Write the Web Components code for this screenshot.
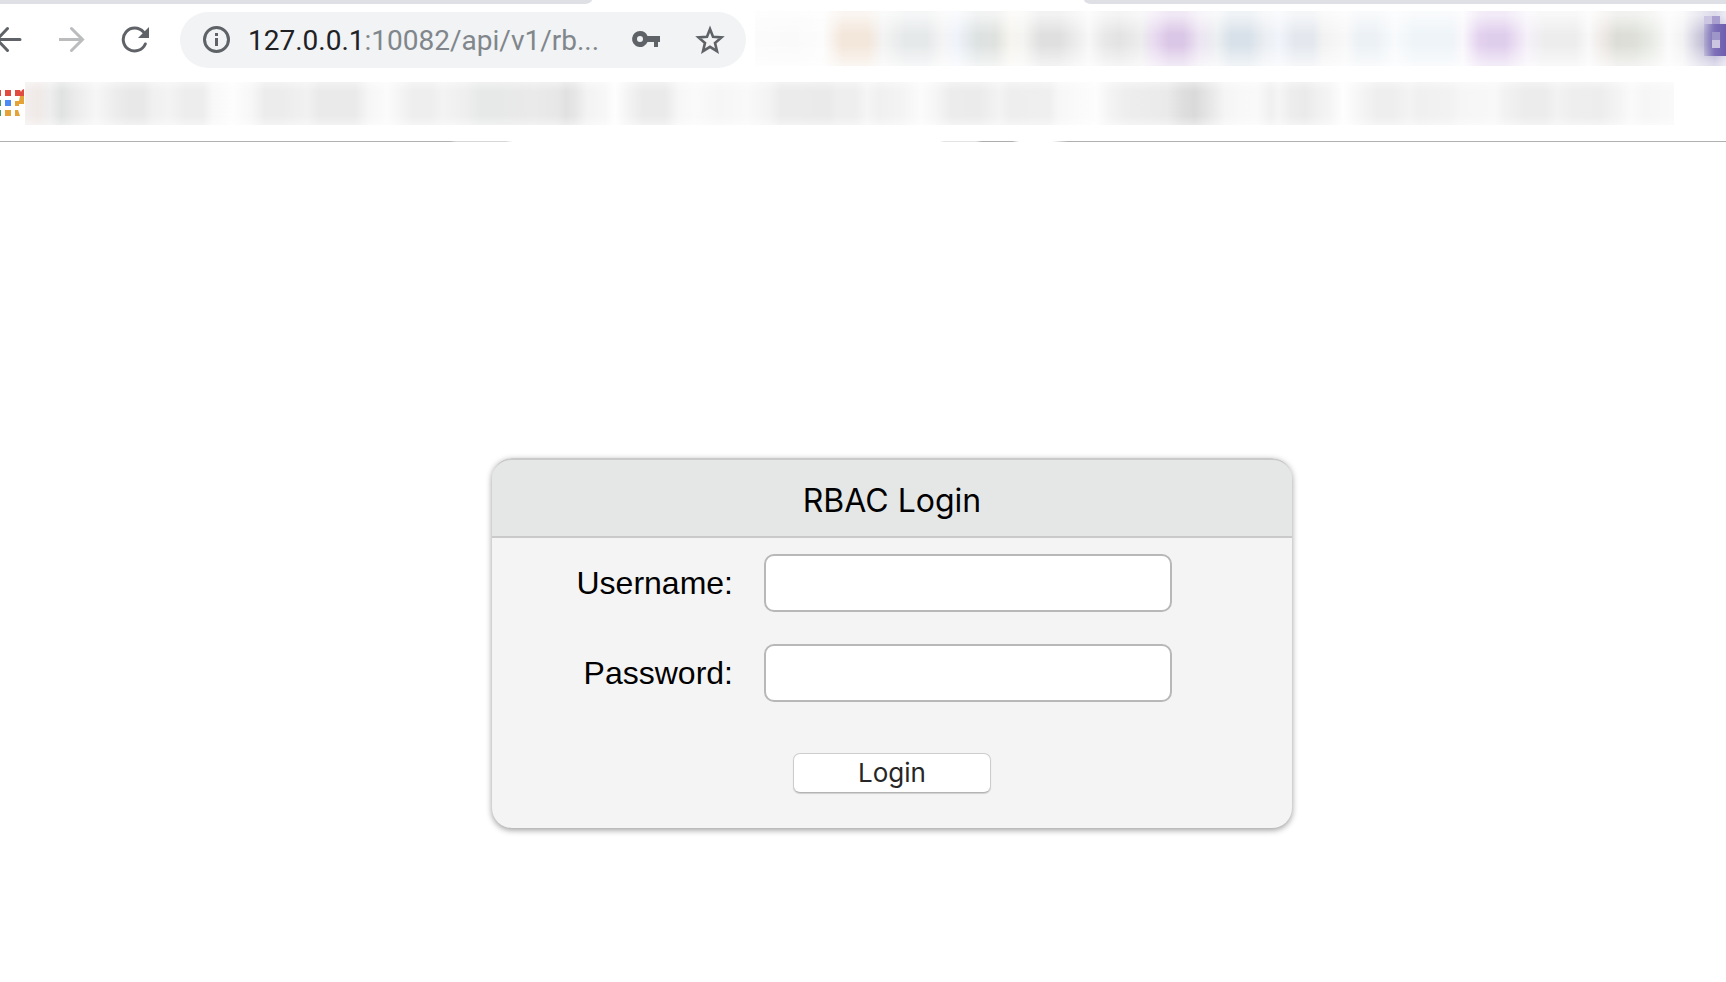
<!DOCTYPE html>
<html lang="en">
<head>
<meta charset="utf-8">
<title>RBAC Login</title>
<style>
body{margin:0;background:#fff;font-family:Inter,"Liberation Sans",sans-serif}
</style>
</head>
<body>
<browser-chrome>
  <address-bar slot="address" host="127.0.0.1" path=":10082/api/v1/rb..."></address-bar>
</browser-chrome>
<login-card heading="RBAC Login">
  <login-field label="Username:" type="text" name="username"></login-field>
  <login-field label="Password:" type="password" name="password"></login-field>
</login-card>
<script>
const define = (name, html, setup) => customElements.define(name, class extends HTMLElement {
  connectedCallback() {
    if (this.shadowRoot) return;
    const t = document.createElement('template');
    t.innerHTML = html;
    this.attachShadow({ mode: 'open' }).append(t.content.cloneNode(true));
    if (setup) setup.call(this, this.shadowRoot);
  }
});

/* A strip of obscured content: neighbouring tones blend into each other. */
const toneRow = (tones) => {
  const end = tones[tones.length - 1][0];
  return 'linear-gradient(90deg,' + tones.map(([x, c]) => `${c} ${(x / end * 100).toFixed(2)}%`).join(',') + ')';
};

define('extension-strip', `
<style>
:host{display:block;position:relative;height:55px}
.row,svg{position:absolute;inset:0}
.edge{opacity:.4}
.row.core{-webkit-mask-image:linear-gradient(#0000 8%,#000 42%,#000 62%,#0000 96%);mask-image:linear-gradient(#0000 8%,#000 42%,#000 62%,#0000 96%)}
svg{left:auto;width:22px;height:55px}
</style>
<div class="row edge"></div><div class="row core"></div>
<svg viewBox="0 0 22 55" aria-hidden="true">
<defs><linearGradient id="g"><stop offset="0" stop-color="#7d70b8" stop-opacity=".2"/><stop offset=".5" stop-color="#7d70b8"/><stop offset="1" stop-color="#6d5daf"/></linearGradient></defs>
<path fill="url(#g)" d="M0 13h22v32H0z"/>
<path fill="#cdc6e2" d="M0 5h8v8H0z"/><path fill="#aaa0d0" d="M8 5h8v8H8z"/>
<path fill="#9e95c9" d="M8 21h8v8H8z"/><path fill="#cbc5df" d="M8 29h8v8H8z"/>
</svg>`, function (root) {
  const tones = [[0,'#fbfbfb'],[40,'#fafafa'],[68,'#fcfcfc'],[88,'#f3e6da'],[112,'#f3e6da'],[128,'#f3f3f3'],[150,'#e6e9ea'],[172,'#e6e9ea'],[188,'#f4f4f5'],[202,'#eff3fa'],[222,'#dde2e2'],[240,'#dfe2df'],[256,'#f7f5ef'],[268,'#f4f4f2'],[286,'#dfdfdf'],[304,'#dfdfdf'],[322,'#ededed'],[334,'#f7f7f7'],[350,'#e8e8e8'],[364,'#e3e3e3'],[386,'#ededee'],[400,'#e8daf0'],[414,'#dac6e6'],[428,'#dac6e6'],[444,'#ece4f2'],[462,'#eceff1'],[476,'#d8e1e9'],[494,'#d8e1e9'],[510,'#ebeef2'],[524,'#f1f4fa'],[540,'#e4e8ee'],[558,'#e4e8ee'],[568,'#f2f2f2'],[590,'#f8f8f8'],[604,'#ecf1f5'],[620,'#ecf1f5'],[640,'#f8fafc'],[660,'#eef4f8'],[696,'#eef4f8'],[708,'#f9f7fb'],[724,'#e4d3ef'],[734,'#dfcdec'],[750,'#dfcdec'],[772,'#f5f0f9'],[790,'#ededed'],[820,'#ededed'],[834,'#f8f8f8'],[850,'#ece7e3'],[862,'#dcddd7'],[880,'#dddfd8'],[896,'#e8ebe5'],[914,'#fafafa'],[928,'#f2f2f4'],[942,'#d0cede'],[960,'#a9a2cb'],[971,'#d2cee5']];
  const bg = toneRow(tones);
  for (const r of root.querySelectorAll('.row')) r.style.background = bg;
});

define('bookmark-strip', `
<style>
:host{display:flex;height:43px;padding-right:52px}
svg{flex:none;width:25px;height:43px}
.row{flex:1;position:relative}
.row::after{content:"";position:absolute;inset:0;background:linear-gradient(#fff6,#fff0 22%,#fff0 78%,#fff6)}
</style>
<svg viewBox="0 0 25 43" aria-hidden="true">
<path fill="#e04a3f" d="M0 8h1v6H0zM5 8h6v6H5zM15 8h5l1 2 1-2 2-1v7H15z"/>
<path fill="#4b9a5f" d="M0 18h1v6H0zM0 28h1v6H0z"/><path fill="#4c8bf5" d="M5 18h6v6H5z"/>
<path fill="#e3a336" d="M5 28h6v6H5zM20 14h4v8h-5v2h-4v-5h4zM15 28h3l2 6h-5z"/>
</svg><div class="row"></div>`, function (root) {
  root.querySelector('.row').style.background = toneRow([[0,'#f2efee'],[12,'#f0e9e7'],[25,'#eee'],[37,'#e0e1e1'],[50,'#ebebeb'],[71,'#f6f6f6'],[92,'#ececec'],[105,'#e8e8e8'],[118,'#e8e8e8'],[128,'#f0f0f0'],[144,'#f3f3f3'],[160,'#ededed'],[178,'#ededed'],[188,'#f8f8f8'],[208,'#fdfdfd'],[226,'#f7f7f7'],[240,'#ececec'],[256,'#ececec'],[282,'#f1f1f1'],[294,'#eaeaea'],[330,'#eaeaea'],[344,'#f6f6f6'],[362,'#fbfbfb'],[388,'#eee'],[406,'#eee'],[418,'#f3f3f3'],[442,'#eee'],[456,'#e7e8e8'],[468,'#e7e8e8'],[510,'#eaeaea'],[533,'#e7e7e7'],[541,'#e1e1e1'],[550,'#e6e6e6'],[562,'#f3f3f3'],[580,'#f7f7f7'],[590,'#fefefe'],[602,'#f4f4f4'],[618,'#eaeaea'],[640,'#eaeaea'],[654,'#f7f7f7'],[670,'#fafafa'],[694,'#f6f6f6'],[722,'#f9f9f9'],[744,'#f3f3f3'],[756,'#ebebeb'],[775,'#ebebeb'],[795,'#eaeaea'],[804,'#eaeaea'],[812,'#eee'],[830,'#eee'],[842,'#f5f5f5'],[854,'#f0f0f0'],[878,'#f4f4f4'],[896,'#fbfbfb'],[910,'#f6f6f6'],[926,'#ececec'],[954,'#ebebeb'],[974,'#f3f3f3'],[985,'#eee'],[1024,'#efefef'],[1034,'#f7f7f7'],[1071,'#fdfdfd'],[1084,'#f4f4f4'],[1100,'#eee'],[1142,'#eaeaea'],[1158,'#dedede'],[1170,'#dadada'],[1186,'#e8e8e8'],[1200,'#f5f5f5'],[1216,'#f8f8f8'],[1232,'#f9f9f9'],[1246,'#f0f0f0'],[1254,'#f5f5f5'],[1266,'#ededed'],[1280,'#eaeaea'],[1292,'#f0f0f0'],[1304,'#f4f4f4'],[1318,'#fefefe'],[1334,'#f6f6f6'],[1352,'#eee'],[1368,'#eee'],[1384,'#f3f3f3'],[1394,'#f0f0f0'],[1424,'#f2f2f2'],[1436,'#f6f6f6'],[1470,'#f8f8f8'],[1480,'#f2f2f2'],[1500,'#ececec'],[1520,'#ececec'],[1532,'#f2f2f2'],[1548,'#eee'],[1576,'#ededed'],[1594,'#f4f4f4'],[1606,'#fafafa'],[1620,'#f6f6f6'],[1649,'#f9f9f9']]);
});

define('address-bar', `
<style>
:host{display:flex;align-items:center;box-sizing:border-box;width:566px;height:56px;padding:0 21px 0 22px;border-radius:28px;background:#f1f3f4}
svg{flex:none;width:30px;height:30px;display:block}
p{flex:1;margin:0 0 0 16px;padding-top:2px;font-family:Roboto,sans-serif;font-size:28px;line-height:34px;color:#80868b;white-space:nowrap}
b{font-weight:400;color:#202124}
button{all:unset;display:block}
button+button{margin-left:34px}
</style>
<svg viewBox="0 0 30 30" fill="none" aria-hidden="true"><circle cx="14.500" cy="14.500" r="12" stroke="#5f6368" stroke-width="3"/><path fill="#5f6368" d="M13 8h3v3h-3zM13 13h3v8h-3z"/></svg>
<p><b></b><span></span></p>
<button aria-label="Saved passwords"><svg viewBox="0 0 30 30"><path fill="#5f6368" fill-rule="evenodd" d="M9 6a8 8 0 1 0 7.500 11H23v5h4v-5h2v-6H16.500A8 8 0 0 0 9 6zm0 5a3 3 0 1 1 0 6 3 3 0 0 1 0-6z"/></svg></button>
<button aria-label="Bookmark this page"><svg viewBox="0 0 30 30"><path fill="none" stroke="#5f6368" stroke-width="2.600" d="M15 4l3 7.700 8.500.7-6.500 5.500 2 8.300-7-4.400-7 4.400 2-8.300-6.500-5.500 8.500-.7z"/></svg></button>`, function (root) {
  root.querySelector('b').textContent = this.getAttribute('host');
  root.querySelector('span').textContent = this.getAttribute('path');
});

define('browser-chrome', `
<style>
:host{display:block;overflow:hidden}
.tabs{display:grid;grid-template-columns:592fr 492fr 642fr;height:4px}
.tabs i{background:#dfe0e6}
.tabs i:first-child{border-bottom-right-radius:8px 4px}
.tabs i:last-child{grid-column:3;border-bottom-left-radius:8px 4px}
nav{display:flex;height:71px;padding-top:7px;box-sizing:border-box}
.nav{display:flex;align-items:center;width:180px;height:56px;flex:none;margin-top:1px}
.nav button{all:unset;display:block;width:60px;height:30px}
.nav svg{display:block;width:30px;height:30px}
.nav button:nth-child(2){width:62px}
::slotted(address-bar){margin-top:1px;flex:none}
extension-strip{flex:1;margin-left:9px}
bookmark-strip{margin-top:7px}
.rule{height:1px;margin-top:16px;background:linear-gradient(90deg,#b0b1b3 450px,#d6d6d6 456px,#d6d6d6 505px,#fff 513px,#fff 940px,#e3e3e3 944px,#e3e3e3 976px,#aeaeae 982px,#aeaeae 1012px,#fff 1019px,#fff 1052px,#b0b0b0 1068px)}
</style>
<div class="tabs"><i></i><i></i></div>
<nav>
<div class="nav">
<button aria-label="Back"><svg viewBox="0 0 30 30" fill="none" stroke="#5f6368" stroke-width="3" stroke-linecap="round"><path d="M20 14.500H-4M7.500 3.500L-3 14.500 7.500 25.500"/></svg></button>
<button aria-label="Forward"><svg viewBox="0 0 30 30" fill="none" stroke="#babcbe" stroke-width="3" stroke-linecap="round"><path d="M.500 14.500h23M12.500 3.500l11 11-11 11"/></svg></button>
<button aria-label="Reload"><svg viewBox="0 0 30 30"><path fill="none" stroke="#5f6368" stroke-width="3" stroke-linecap="round" d="M24.300 19A11.500 11.500 0 1 1 22.500 7"/><path fill="#5f6368" d="M28 2v11H17z"/></svg></button>
</div>
<slot name="address"></slot>
<extension-strip></extension-strip>
</nav>
<bookmark-strip></bookmark-strip>
<div class="rule"></div>`);

define('login-field', `
<style>
:host{display:grid;grid-template-columns:241px 408px;column-gap:31px;align-items:center}
label{text-align:right;font-family:"Liberation Sans",sans-serif;font-size:32px;line-height:40px;color:#000}
input{box-sizing:border-box;width:100%;height:58px;margin:0;padding:0 12px;border:2px solid #b8b8b8;border-radius:10px;background:#fff;font:28px Inter,sans-serif;outline:0}
</style>
<label for="f"></label><input id="f">`, function (root) {
  root.querySelector('label').textContent = this.getAttribute('label');
  const i = root.querySelector('input');
  i.type = this.getAttribute('type');
  i.name = this.getAttribute('name');
});

define('login-card', `
<style>
:host{display:flex;justify-content:center;padding:316px 0 80px 58px}
form{box-sizing:border-box;width:800px;max-width:100%;border-radius:20px;background:#f4f4f4;box-shadow:0 2px 6px rgba(0,0,0,.4);overflow:hidden;padding-bottom:35px}
h1{box-sizing:border-box;height:80px;margin:0;padding-top:5px;border:solid #cacaca;border-width:2px 0;border-radius:20px 20px 0 0;background:#e5e7e6;font-size:32px;font-weight:400;line-height:72px;text-align:center;color:#000}
.fields{display:grid;row-gap:32px;padding-top:16px}
button{display:block;box-sizing:border-box;width:198px;height:40px;margin:51px auto 0;padding:0;border:1px solid #cdcdcd;border-bottom-color:#b4b4b4;border-radius:7px;background:#fff;box-shadow:0 1px 1px rgba(0,0,0,.15);font:26px/36px Inter,sans-serif;color:#262626}
</style>
<form><h1></h1><div class="fields"><slot></slot></div><button type="button">Login</button></form>`, function (root) {
  root.querySelector('h1').textContent = this.getAttribute('heading');
});
</script>
</body>
</html>
